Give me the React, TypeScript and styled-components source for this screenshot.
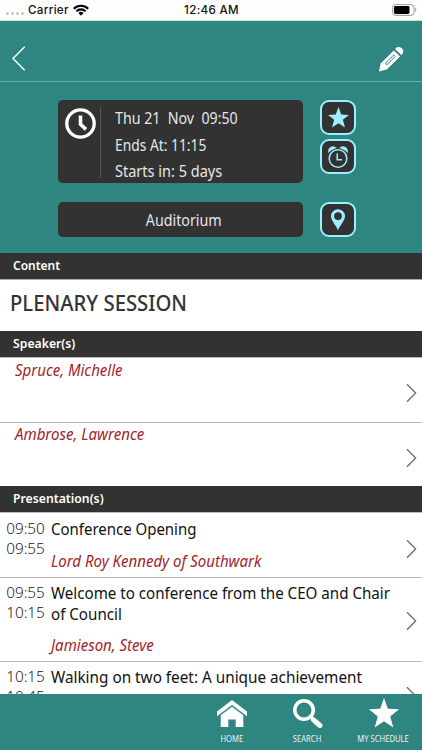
import React from "react";
import styled, { createGlobalStyle } from "styled-components";

const TEAL = "#2f8580";
const DARK = "#323232";
const AQUA = "#9defff";
const RED = "#a3242b";

const GlobalStyle = createGlobalStyle`
  * { box-sizing: border-box; }
  body { margin: 0; background: #fff; font-family: "Noto Sans", "Open Sans", sans-serif; }
  svg { display: block; flex: none; }
`;

const Screen = styled.div`
  width: 422px;
  height: 750px;
  overflow: hidden;
  display: flex;
  flex-direction: column;
  background: #fff;
`;

/* Condenses a run of text horizontally. */
const Narrow = styled.span<{ $scale: number; $center?: boolean }>`
  display: inline-block;
  white-space: pre;
  transform: scaleX(${(p) => p.$scale});
  transform-origin: ${(p) => (p.$center ? "center" : "left")};
`;

const StatusBar = styled.header`
  height: 21px;
  flex: none;
  display: grid;
  grid-template-columns: 1fr auto 1fr;
  align-items: center;
  padding: 0 5px 0 6px;
  border-bottom: 1px solid #cfe3e1;
  background: #fefefe;
  font: 500 11.6px/20px Inter, sans-serif;
  letter-spacing: 0.32px;
  color: #111;
`;

const Carrier = styled.div`
  display: flex;
  align-items: center;
  gap: 4px;
`;

const Signal = styled.span`
  display: flex;
  gap: 2px;
  padding-top: 7px;
  i { width: 3px; height: 3px; border-radius: 50%; background: #c4c4c4; }
`;

const BatterySlot = styled.div`
  display: flex;
  justify-content: flex-end;
`;

const NavBar = styled.nav`
  height: 61px;
  flex: none;
  display: flex;
  justify-content: space-between;
  align-items: flex-start;
  padding: 25px 18px 0 12px;
  background: ${TEAL};
  border-bottom: 1px solid #70aba7;
`;

const Hero = styled.section`
  height: 171px;
  flex: none;
  padding: 18px 66px 0 58px;
  display: grid;
  grid-template-columns: 245px 36px;
  grid-template-rows: 83px 35px;
  column-gap: 17px;
  row-gap: 19px;
  background: ${TEAL};
`;

const InfoCard = styled.div`
  display: flex;
  padding: 7px 0 5px 7px;
  border-radius: 5px;
  background: ${DARK};
`;

const Divider = styled.div`
  width: 1px;
  margin: 0 14px 0 4px;
  background: #565656;
`;

const InfoLines = styled.div`
  margin-top: -2px;
`;

const InfoLine = styled.div`
  height: 26.5px;
  font-size: 15.7px;
  line-height: 26.5px;
  color: #e6e6e6;
`;

const RoomCard = styled.div`
  display: flex;
  justify-content: center;
  padding-left: 6px;
  border-radius: 5px;
  background: ${DARK};
  font-size: 15.7px;
  line-height: 36px;
  color: #e6e6e6;
`;

const Actions = styled.div`
  display: flex;
  flex-direction: column;
  gap: 4px;
`;

const ActionButton = styled.button`
  width: 36px;
  height: 35px;
  flex: none;
  display: grid;
  place-items: center;
  padding: 0;
  border: 2px solid ${AQUA};
  border-radius: 9px;
  background: ${DARK};
  color: ${AQUA};
`;

const SectionTitle = styled.h2`
  height: 26px;
  flex: none;
  margin: 0;
  padding-left: 12.5px;
  background: ${DARK};
  color: #fff;
  font-size: 13.3px;
  line-height: 24px;
  font-weight: 600;
`;

const SessionTitle = styled.h1`
  height: 52px;
  flex: none;
  margin: 0;
  padding-left: 10px;
  border-top: 1px solid #aaa;
  font-size: 21px;
  line-height: 46px;
  font-weight: 500;
  color: #343434;
`;

const Row = styled.div<{ $height: number; $top: number }>`
  height: ${(p) => p.$height}px;
  flex: none;
  display: flex;
  align-items: flex-start;
  padding: ${(p) => p.$top}px 5.5px 0 0;
  border-top: 1px solid #b9b9b9;
`;

const RowArrow = styled.div<{ $top: number }>`
  padding-top: ${(p) => p.$top}px;
`;

const Person = styled.div`
  font-size: 15.5px;
  line-height: 21px;
  font-style: italic;
  color: ${RED};
`;

const SpeakerCell = styled.div<{ $inset: number }>`
  flex: 1;
  padding-left: ${(p) => p.$inset}px;
`;

const Times = styled.div`
  width: 51px;
  flex: none;
  text-align: center;
  font-size: 15.3px;
  line-height: 19.5px;
  font-weight: 300;
  color: #222;
`;

const Talk = styled.div`
  flex: 1;
  min-width: 0;
`;

const TalkTitle = styled.div`
  margin-bottom: 11px;
  font-size: 16px;
  line-height: 20.5px;
  color: #111;
`;

const List = styled.main`
  flex: 1;
  min-height: 0;
  overflow: hidden;
  display: flex;
  flex-direction: column;
`;

const TabBar = styled.footer`
  height: 56px;
  flex: none;
  display: flex;
  justify-content: flex-end;
  padding-right: 0.5px;
  background: ${TEAL};
`;

const Tab = styled.div`
  width: 76px;
  display: flex;
  flex-direction: column;
  align-items: center;
  color: #e8f4f3;
  font-size: 8.6px;
  line-height: 12px;
  svg { margin: 4px 0 5px; color: #fff; }
`;

const Chevron = () => (
  <svg width="11" height="20" viewBox="0 0 11 20" fill="none" stroke="#6f6a6a" strokeWidth="1.3">
    <path d="M1 1.2 9.7 10 1 18.8" />
  </svg>
);

const STAR = "M12 0 15.1 8.6 24 9 17 14.7 19.4 23.5 12 18.5 4.6 23.5 7 14.7 0 9 8.9 8.6Z";

const Star = ({ size }: { size: number }) => (
  <svg width={size} height={size} viewBox="0 0 24 24" fill="currentColor"><path d={STAR} /></svg>
);

const schedule = [
  { text: "Thu 21  Nov  09:50", scale: 0.905 },
  { text: "Ends At: 11:15", scale: 0.88 },
  { text: "Starts in: 5 days", scale: 0.925 },
];

const speakers = [
  { name: "Spruce, Michelle", scale: 0.967, height: 65, top: 2, inset: 15, arrow: 23 },
  { name: "Ambrose, Lawrence", scale: 0.972, height: 64, top: 1, inset: 14.5, arrow: 23.5 },
];

const talks = [
  { times: ["09:50", "09:55"], title: ["Conference Opening"], scale: 0.936, person: "Lord Roy Kennedy of Southwark", height: 65, top: 6, arrow: 20 },
  { times: ["09:55", "10:15"], title: ["Welcome to conference from the CEO and Chair", "of Council"], scale: 0.946, person: "Jamieson, Steve", height: 84, top: 5, arrow: 28 },
  { times: ["10:15", "10:45"], title: ["Walking on two feet: A unique achievement"], scale: 0.956, person: "", height: 84, top: 5, arrow: 19 },
];

export default function App() {
  return (
    <Screen>
      <GlobalStyle />
      <StatusBar>
        <Carrier>
          <Signal><i /><i /><i /><i /></Signal>
          <span>Carrier</span>
          <svg width="16" height="12" viewBox="0 0 16 12">
            <g fill="none" stroke="#000" strokeWidth="2.1">
              <path d="M.8 4.7a10.2 10.2 0 0 1 14.4 0" />
              <path d="M3.4 7.3a6.5 6.5 0 0 1 9.2 0" />
            </g>
            <path d="M8 11.7 5.4 9.1a3.7 3.7 0 0 1 5.2 0Z" />
          </svg>
        </Carrier>
        <span>12:46 AM</span>
        <BatterySlot>
          <svg width="25" height="12" viewBox="0 0 25 12">
            <rect x=".6" y=".6" width="21.5" height="10.8" rx="3" fill="#fff" stroke="#999" />
            <rect x="2" y="2" width="15.5" height="8" rx="1.4" />
            <path d="M23.2 4v4a2.3 2.3 0 0 0 0-4Z" fill="#999" />
          </svg>
        </BatterySlot>
      </StatusBar>

      <NavBar>
        <svg width="14" height="25" viewBox="0 0 14 25" fill="none" stroke="#fff" strokeWidth="1.4">
          <path d="M12.7.8 1 12.5 12.7 24.2" />
        </svg>
        <svg width="26" height="26" viewBox="0 0 26 26" fill="#fff">
          <path d="M1 25.500 2.600 17.500 15.800 4.600 22 10.400 8.800 23.500Z" />
          <path d="M7.400 17.200 15.700 9 17.300 10.500 9 18.700Z" fill="none" stroke={TEAL} strokeWidth="1" />
          <path d="M17.200 3.200C18.200.8 21.400.1 23.800 2.300 26.200 4.500 25.600 7.700 23.300 9Z" />
        </svg>
      </NavBar>

      <Hero>
        <InfoCard>
          <svg width="31" height="32" viewBox="0 0 31 32" fill="none" stroke="#fff">
            <circle cx="15.5" cy="16.5" r="13.7" strokeWidth="3.3" />
            <path d="M15.5 8.5v8.8l5.5 5" strokeWidth="3.6" />
          </svg>
          <Divider />
          <InfoLines>
            {schedule.map((l) => (
              <InfoLine key={l.text}><Narrow $scale={l.scale}>{l.text}</Narrow></InfoLine>
            ))}
          </InfoLines>
        </InfoCard>
        <Actions>
          <ActionButton><Star size={21} /></ActionButton>
          <ActionButton>
            <svg width="22" height="24" viewBox="0 0 22 24" fill="none" stroke="currentColor">
              <circle cx="11" cy="13.5" r="8.8" strokeWidth="1.5" />
              <path d="M10.2 8.5v6.200h4.800" strokeWidth="1.5" />
              <path d="M1.900 6.300A4 4 0 0 1 8 2.700C5.600 3.400 3.500 4.500 1.900 6.300ZM20.100 6.300A4 4 0 0 0 14 2.700c2.400.7 4.500 1.800 6.100 3.600Z" fill="currentColor" strokeWidth="1.5" />
            </svg>
          </ActionButton>
        </Actions>
        <RoomCard><Narrow $scale={0.91} $center>Auditorium</Narrow></RoomCard>
        <ActionButton>
          <svg width="16" height="22" viewBox="0 0 16 22" fill="currentColor">
            <path fillRule="evenodd" d="M8 21.5C6.7 17 1 11.8 1 7.2a7 7 0 0 1 14 0C15 11.8 9.3 17 8 21.500ZM8 3.200a3.900 3.900 0 1 0 0 7.800 3.900 3.900 0 0 0 0-7.800Z" />
          </svg>
        </ActionButton>
      </Hero>

      <List>
        <SectionTitle><Narrow $scale={0.9}>Content</Narrow></SectionTitle>
        <SessionTitle><Narrow $scale={0.966}>PLENARY SESSION</Narrow></SessionTitle>
        <SectionTitle><Narrow $scale={0.92}>Speaker(s)</Narrow></SectionTitle>
        {speakers.map((s) => (
          <Row key={s.name} $height={s.height} $top={s.top}>
            <SpeakerCell $inset={s.inset}><Person><Narrow $scale={s.scale}>{s.name}</Narrow></Person></SpeakerCell>
            <RowArrow $top={s.arrow}><Chevron /></RowArrow>
          </Row>
        ))}
        <SectionTitle><Narrow $scale={0.92}>Presentation(s)</Narrow></SectionTitle>
        {talks.map((t) => (
          <Row key={t.title[0]} $height={t.height} $top={t.top}>
            <Times>{t.times.map((x) => <div key={x}>{x}</div>)}</Times>
            <Talk>
              <TalkTitle>
                {t.title.map((line) => (
                  <div key={line}><Narrow $scale={t.scale}>{line}</Narrow></div>
                ))}
              </TalkTitle>
              {t.person && <Person><Narrow $scale={0.969}>{t.person}</Narrow></Person>}
            </Talk>
            <RowArrow $top={t.arrow}><Chevron /></RowArrow>
          </Row>
        ))}
      </List>

      <TabBar>
        <Tab>
          <svg width="30" height="30" viewBox="0 0 30 30" fill="currentColor">
            <path d="M15 2 30 13.5V18.300L15 7 0 18.300V13.500Z" />
            <path d="M15 8.700 26.300 17.300V29H18.700V21.500H11.300V29H3.700V17.300Z" />
          </svg>
          <Narrow $scale={0.89} $center>HOME</Narrow>
        </Tab>
        <Tab>
          <svg width="30" height="30" viewBox="0 0 30 30" fill="none" stroke="currentColor">
            <circle cx="11" cy="12" r="9.300" strokeWidth="3.600" />
            <path d="M17.500 18.500 20.500 21.500" strokeWidth="3" />
            <path d="M20.500 21.800 27 27.500" strokeWidth="5" strokeLinecap="round" />
          </svg>
          <Narrow $scale={0.89} $center>SEARCH</Narrow>
        </Tab>
        <Tab><Star size={30} /><Narrow $scale={0.89} $center>MY SCHEDULE</Narrow></Tab>
      </TabBar>
    </Screen>
  );
}
